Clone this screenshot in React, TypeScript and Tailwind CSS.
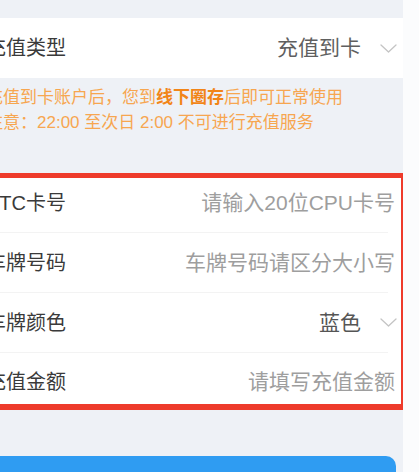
import React from "react";

function Chevron() {
  return (
    <svg width="17" height="9" viewBox="0 0 17 9" fill="none" className="shrink-0">
      <polyline points="1,1 8.5,8 16,1" stroke="#c4c4c4" strokeWidth="1.3" strokeLinecap="round" strokeLinejoin="round" />
    </svg>
  );
}

const fields = [
  { label: "ETC卡号", value: "请输入20位CPU卡号", tone: "text-[#9e9e9e]", select: false },
  { label: "车牌号码", value: "车牌号码请区分大小写", tone: "text-[#9e9e9e]", select: false },
  { label: "车牌颜色", value: "蓝色", tone: "text-[#555]", select: true },
  { label: "充值金额", value: "请填写充值金额", tone: "text-[#9e9e9e]", select: false },
];

export default function App() {
  return (
    <div className="flex h-[472px] w-[419px] overflow-hidden bg-[#fbfcfd] font-['Liberation_Sans','Noto_Sans_CJK_SC',sans-serif]">
      <div className="w-[403px] shrink-0 overflow-hidden bg-[#eef1f6] pt-[18px]">
        <div className="-ml-[14px] flex w-[417px] flex-col">
          {/* recharge type */}
          <div className="flex h-[60px] items-center justify-between bg-white pr-[6px] text-[20px]">
            <span className="text-[#3a3a3a]">充值类型</span>
            <div className="flex items-center gap-[19px]">
              <span className="text-[21px] text-[#5f5f5f]">充值到卡</span>
              <Chevron />
            </div>
          </div>

          {/* notice */}
          <div className="h-[95px] pt-[7px] text-[17px] leading-[25px] text-[#f7a650]">
            <p className="whitespace-nowrap">
              充值到卡账户后，您到<span className="font-bold text-[#f28518]">线下圈存</span>后即可正常使用
            </p>
            <p className="whitespace-nowrap">注意：22:00 至次日 2:00 不可进行充值服务</p>
          </div>

          {/* card fields */}
          <div className="relative flex flex-col bg-white text-[20px]">
            {fields.map((f, i) => (
              <div key={f.label}>
                <div
                  className={`flex items-center justify-between ${i === 3 ? "h-[57px]" : "h-[59px]"} ${f.select ? "pr-[6px]" : "pr-[8px]"}`}
                >
                  <span className="text-[#3a3a3a]">{f.label}</span>
                  <div className="flex items-center gap-[19px]">
                    <span className={`text-[21px] ${f.tone}`}>{f.value}</span>
                    {f.select && <Chevron />}
                  </div>
                </div>
                {i < 3 && <div className="mr-[15px] h-px bg-[#f3f3f3]" />}
              </div>
            ))}
            <div className="pointer-events-none absolute inset-y-0 -left-[20px] right-0 border-x-2 border-t-[5px] border-b-[6px] border-[#ee3b2b]" />
          </div>

          {/* submit button */}
          <div className="mr-[7px] mt-[46px] h-[40px] rounded-tr-[10px] bg-[#2f9cf2]" />
        </div>
      </div>
      <div className="flex-1" />
    </div>
  );
}
